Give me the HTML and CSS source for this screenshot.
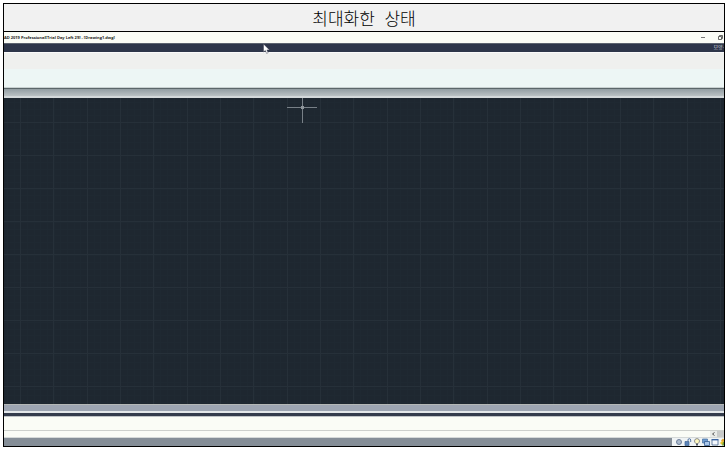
FILE: index.html
```html
<!DOCTYPE html>
<html lang="ko">
<head>
    <meta charset="UTF-8">
    <meta name="viewport" content="width=device-width, initial-scale=1.0">
    <title>최대화한 상태</title>
    <link rel="stylesheet" href="styles.css">
</head>
<body>

    <div class="frame">
        <h1 class="caption">최대화한&nbsp; 상태</h1>

        <div class="window">
            <!-- Title bar -->
            <header class="title-bar">
                <span class="title">AD 2019 Professional[Trial Day Left 29] - [Drawing1.dwg]</span>
                <div class="window-buttons">
                    <button type="button" aria-label="Minimize">
                        <svg width="5" height="7" viewBox="0 0 5 7"><path d="M0 3.5h4" stroke="#777"/></svg>
                    </button>
                    <button type="button" aria-label="Restore">
                        <svg width="5" height="7" viewBox="0 0 5 7"><path d="M1.5 2.5v-1h3v3h-1M.5 2.5h3v3h-3z" fill="none" stroke="#444" stroke-width=".8"/></svg>
                    </button>
                </div>
            </header>

            <!-- Menu bar -->
            <nav class="menu-bar">
                <a href="#">모양·</a>
                <svg class="pointer" width="7" height="10" viewBox="0 0 7 10"><path d="M.5 0v8l1.8-1.6L3.6 9.4l1.6-.7-1.3-2.8h2.6z" fill="#fff" stroke="#24293a" stroke-width=".4"/></svg>
            </nav>

            <div class="tool-row"></div>
            <div class="ribbon"></div>
            <div class="tab-strip"></div>

            <!-- Drawing area -->
            <main class="canvas">
                <svg class="grid" width="100%" height="100%">
                    <defs>
                        <pattern id="minor" width="20" height="20" x="3" y="4" patternUnits="userSpaceOnUse">
                            <path d="M.5 0v20M7.5 0v20M13.5 0v20M0 .5h20M0 7.5h20M0 13.5h20" stroke="#1f2932"/>
                        </pattern>
                        <pattern id="major-x" width="100" height="10" x="16" patternUnits="userSpaceOnUse">
                            <path d="M.5 0v10M33.5 0v10M67.5 0v10" stroke="#263039"/>
                        </pattern>
                        <pattern id="major-y" width="10" height="33" y="24" patternUnits="userSpaceOnUse">
                            <path d="M0 .5h10" stroke="#263039"/>
                        </pattern>
                    </defs>
                    <rect width="100%" height="100%" fill="url(#minor)"/>
                    <rect width="100%" height="100%" fill="url(#major-x)"/>
                    <rect width="100%" height="100%" fill="url(#major-y)"/>
                </svg>
                <svg class="crosshair" width="30" height="25" viewBox="0 0 30 25">
                    <path d="M0 9.5h30M15.5 0v25" stroke="#788087"/>
                    <path d="M14 8h3v3h-3z" fill="#8f969b"/>
                </svg>
            </main>

            <div class="layout-bar"></div>
            <div class="command-history"></div>
            <div class="command-line">
                <button type="button" class="scroll-left" aria-label="Scroll left">
                    <svg width="7" height="6" viewBox="0 0 7 6"><path d="M4.500 1.500L2.500 3l2 1.500" fill="none" stroke="#555"/></svg>
                </button>
                <span class="scroll-thumb"></span>
            </div>

            <!-- Status bar -->
            <footer class="status-bar">
                <div class="status-icons">
                    <svg width="8" height="8" viewBox="0 0 8 8"><circle cx="4" cy="4" r="2.500" fill="#9aabc2" stroke="#71829c"/><path d="M4 2v4M2 4h4" stroke="#c1ccda" stroke-width=".6"/></svg>
                    <svg width="8" height="8" viewBox="0 0 8 8"><path d="M1 3.500h4v4H1z" fill="#5b84b8" stroke="#3f6595" stroke-width=".7"/><path d="M4 4V2q0-1.300 1.300-1.300T6.700 2v2" fill="none" stroke="#5878a3"/></svg>
                    <svg width="8" height="8" viewBox="0 0 8 8"><path d="M2.900 5.500Q1.500 4.300 1.500 2.900 1.700.7 4 .6 6.300.7 6.500 2.900q0 1.400-1.400 2.600z" fill="#fff8be" stroke="#5d6068" stroke-width=".7"/><path d="M3 6h2v1.500H3z" fill="#4c5564"/></svg>
                    <svg width="8" height="8" viewBox="0 0 8 8"><path d="M.5 1h5v4h-5z" fill="#6e9bd0" stroke="#48719f" stroke-width=".7"/><path d="M2.500 3.500h5v4h-5z" fill="#a9c7ea" stroke="#365e92" stroke-width=".8"/></svg>
                    <svg width="8" height="8" viewBox="0 0 8 8"><path d="M1 1.500h6v5.500H1z" fill="#f5f9fd" stroke="#4a6791" stroke-width=".8"/><path d="M.6 1.700h6.800" stroke="#3c65a2" stroke-width="1.400"/></svg>
                    <svg width="4" height="8" viewBox="0 0 4 8"><path d="M3 .5l2 2-2 2-2-2z" fill="#e3a52c"/><path d="M2 3l2 2-2 2-2-2z" fill="#e8c52e"/><path d="M3 4h2v3.500H2z" fill="#699c3b"/></svg>
                </div>
            </footer>
        </div>
    </div>

</body>
</html>
```
FILE: styles.css
```css
* {
    box-sizing: border-box;
}

body {
    margin: 0;
    padding: 3px;
    height: 100vh;
    background-color: #fff;
    font-family: "Open Sans", "Noto Sans CJK KR", sans-serif;
}

/* Outer table-like frame */
.frame {
    display: flex;
    flex-direction: column;
    height: calc(100vh - 6px);
    border: 1px solid #000;
}

.caption {
    margin: 0;
    height: 28px;
    border-bottom: 1px solid #000;
    background-color: #f1f1f1;
    color: #000;
    font-family: "Noto Sans CJK KR", sans-serif;
    font-size: 17px;
    font-weight: 300;
    line-height: 28px;
    text-align: center;
}

.window {
    display: flex;
    flex: 1;
    flex-direction: column;
    min-height: 0;
    overflow: hidden;
}

button {
    display: flex;
    padding: 0;
    border: none;
    background: none;
}

/* Title bar */
.title-bar {
    display: flex;
    align-items: center;
    justify-content: space-between;
    height: 11px;
    background-color: #fafcf6;
}

.title {
    color: #222;
    font-size: 4px;
    font-weight: 700;
    line-height: 11px;
    white-space: nowrap;
}

.window-buttons {
    display: flex;
    gap: 12px;
    padding-right: 1px;
}

/* Menu bar */
.menu-bar {
    position: relative;
    display: flex;
    justify-content: flex-end;
    height: 9px;
    border-top: 1px solid #5d6470;
    background-color: #2e364a;
}

.menu-bar a {
    color: #d0d4dc;
    font-size: 5px;
    line-height: 7px;
    text-decoration: none;
}

.pointer {
    position: absolute;
    top: 0;
    left: 36%;
}

.tool-row {
    height: 17px;
    border-top: 1px solid #fafafa;
    background-color: #eff0ee;
}

.ribbon {
    height: 19px;
    border-bottom: 1px solid #c9d1d1;
    background-color: #edf6f5;
}

.tab-strip {
    height: 10px;
    border-top: 1px solid #5b6669;
    border-bottom: 2px solid #d3d8da;
    background: linear-gradient(#929da2, #bac1c4);
}

/* Drawing area */
.canvas {
    position: relative;
    flex: 1;
    min-height: 0;
    background-color: #1e2730;
}

.grid {
    position: absolute;
    inset: 0;
}

.crosshair {
    position: absolute;
    top: 0;
    left: 283px;
}

.layout-bar {
    height: 12px;
    border-top: 1px solid #b4b8b7;
    border-bottom: 3px solid #343c4c;
    background: linear-gradient(#9da5b2 6px, #e4e8ea 6px);
}

/* Command window */
.command-history {
    height: 15px;
    border-top: 1px solid #bfc3c6;
    border-bottom: 1px solid #cdd0cc;
    background-color: #fafcf6;
}

.command-line {
    display: flex;
    align-items: center;
    justify-content: flex-end;
    height: 7px;
    border-bottom: 1px solid #d5d9d8;
    background-color: #fafcf6;
}

.scroll-left {
    background-color: #e9ebe8;
}

.scroll-thumb {
    width: 7px;
    height: 6px;
    background-color: #c8cac9;
}

/* Status bar */
.status-bar {
    display: flex;
    justify-content: flex-end;
    height: 8px;
    background-color: #858e97;
}

.status-icons {
    display: flex;
    gap: 1px;
    padding-left: 3px;
    background-color: #eff3f4;
}
```
